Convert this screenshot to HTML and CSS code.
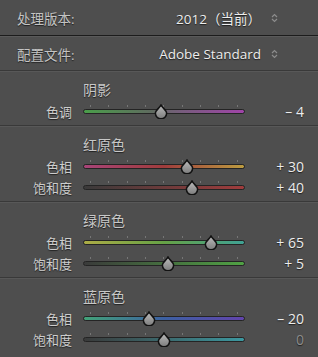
FILE: index.html
```html
<!DOCTYPE html>
<html lang="zh-CN">
<head>
<meta charset="utf-8">
<title>Camera Calibration</title>
<link rel="stylesheet" href="styles.css">
</head>
<body>
<svg class="defs" width="0" height="0" aria-hidden="true">
  <defs>
    <linearGradient id="thumbFill" x1="0" y1="0" x2="0" y2="1">
      <stop offset="0" stop-color="#bdbdbd"/>
      <stop offset="1" stop-color="#7c7c7c"/>
    </linearGradient>
  </defs>
</svg>
<div class="panel">
  <div class="row">
    <span class="lbl">处理版本:</span>
    <span class="val">2012（当前）</span>
    <svg class="updown" width="7" height="10" viewBox="0 0 7 10"><path d="M1 4 L3.5 1.5 L6 4 M1 6 L3.5 8.5 L6 6" fill="none" stroke="#8c8c8c" stroke-width="1.2"/></svg>
  </div>
  <div class="row second">
    <span class="lbl">配置文件:</span>
    <span class="val">Adobe Standard</span>
    <svg class="updown" width="7" height="10" viewBox="0 0 7 10"><path d="M1 4 L3.5 1.5 L6 4 M1 6 L3.5 8.5 L6 6" fill="none" stroke="#8c8c8c" stroke-width="1.2"/></svg>
  </div>

  <section class="group">
    <div class="ghead">阴影</div>
    <div class="srow">
      <span class="slbl">色调</span>
      <div class="track g-tone"><i class="ticks"></i><svg class="thumb" style="left:48.1%" width="14" height="15" viewBox="0 0 14 15"><path d="M7 1 C8.2 3.8 12.6 6.2 12.6 9.2 A5.6 5.6 0 0 1 1.4 9.2 C1.4 6.2 5.8 3.8 7 1 Z" fill="url(#thumbFill)" stroke="#121212" stroke-width="1.5"/></svg></div>
      <span class="sval">– 4</span>
    </div>
  </section>

  <section class="group">
    <div class="ghead">红原色</div>
    <div class="srow">
      <span class="slbl">色相</span>
      <div class="track g-red-hue"><i class="ticks"></i><svg class="thumb" style="left:64.2%" width="14" height="15" viewBox="0 0 14 15"><path d="M7 1 C8.2 3.8 12.6 6.2 12.6 9.2 A5.6 5.6 0 0 1 1.4 9.2 C1.4 6.2 5.8 3.8 7 1 Z" fill="url(#thumbFill)" stroke="#121212" stroke-width="1.5"/></svg></div>
      <span class="sval">+ 30</span>
    </div>
    <div class="srow">
      <span class="slbl">饱和度</span>
      <div class="track g-red-sat"><i class="ticks"></i><svg class="thumb" style="left:67.3%" width="14" height="15" viewBox="0 0 14 15"><path d="M7 1 C8.2 3.8 12.6 6.2 12.6 9.2 A5.6 5.6 0 0 1 1.4 9.2 C1.4 6.2 5.8 3.8 7 1 Z" fill="url(#thumbFill)" stroke="#121212" stroke-width="1.5"/></svg></div>
      <span class="sval">+ 40</span>
    </div>
  </section>

  <section class="group">
    <div class="ghead">绿原色</div>
    <div class="srow">
      <span class="slbl">色相</span>
      <div class="track g-green-hue"><i class="ticks"></i><svg class="thumb" style="left:79.6%" width="14" height="15" viewBox="0 0 14 15"><path d="M7 1 C8.2 3.8 12.6 6.2 12.6 9.2 A5.6 5.6 0 0 1 1.4 9.2 C1.4 6.2 5.8 3.8 7 1 Z" fill="url(#thumbFill)" stroke="#121212" stroke-width="1.5"/></svg></div>
      <span class="sval">+ 65</span>
    </div>
    <div class="srow">
      <span class="slbl">饱和度</span>
      <div class="track g-green-sat"><i class="ticks"></i><svg class="thumb" style="left:52.5%" width="14" height="15" viewBox="0 0 14 15"><path d="M7 1 C8.2 3.8 12.6 6.2 12.6 9.2 A5.6 5.6 0 0 1 1.4 9.2 C1.4 6.2 5.8 3.8 7 1 Z" fill="url(#thumbFill)" stroke="#121212" stroke-width="1.5"/></svg></div>
      <span class="sval">+ 5</span>
    </div>
  </section>

  <section class="group">
    <div class="ghead">蓝原色</div>
    <div class="srow">
      <span class="slbl">色相</span>
      <div class="track g-blue-hue"><i class="ticks"></i><svg class="thumb" style="left:40.7%" width="14" height="15" viewBox="0 0 14 15"><path d="M7 1 C8.2 3.8 12.6 6.2 12.6 9.2 A5.6 5.6 0 0 1 1.4 9.2 C1.4 6.2 5.8 3.8 7 1 Z" fill="url(#thumbFill)" stroke="#121212" stroke-width="1.5"/></svg></div>
      <span class="sval">– 20</span>
    </div>
    <div class="srow">
      <span class="slbl">饱和度</span>
      <div class="track g-blue-sat"><i class="ticks"></i><svg class="thumb" style="left:50%" width="14" height="15" viewBox="0 0 14 15"><path d="M7 1 C8.2 3.8 12.6 6.2 12.6 9.2 A5.6 5.6 0 0 1 1.4 9.2 C1.4 6.2 5.8 3.8 7 1 Z" fill="url(#thumbFill)" stroke="#121212" stroke-width="1.5"/></svg></div>
      <span class="sval dim">0</span>
    </div>
  </section>
</div>
</body>
</html>
```

FILE: styles.css
```css
* { box-sizing: border-box; }

html, body {
  margin: 0;
  padding: 0;
  background: #4e4e4e;
}

body {
  width: 318px;
  height: 357px;
  overflow: hidden;
  font-family: "Open Sans", "Noto Sans CJK SC", sans-serif;
  color: #d0d0d0;
  text-shadow: 0 1px 1px rgba(0, 0, 0, 0.6);
}

.defs {
  position: absolute;
  width: 0;
  height: 0;
}

.panel {
  display: flex;
  flex-direction: column;
}

.row {
  display: flex;
  align-items: center;
  height: 35px;
  padding: 0 40px 0 17px;
  font-size: 13.5px;
}

.row.second {
  border-top: 1px solid #1c1c1c;
  box-shadow: inset 0 1px 0 #5a5a5a;
  padding-top: 1px;
}

.lbl {
  color: #c4c4c4;
  flex: 1;
}

.val {
  color: #ededed;
  margin-right: 10px;
}

.updown {
  display: block;
}

.group {
  border-top: 1px solid #393939;
  box-shadow: inset 0 1px 0 #585858;
  padding: 7px 0 3px;
}

.ghead {
  height: 23px;
  line-height: 23px;
  padding-left: 83px;
  font-size: 14px;
  color: #c8c8c8;
}

.srow {
  display: grid;
  grid-template-columns: 83px 162px 59px;
  align-items: center;
  height: 21px;
  padding-right: 14px;
}

.slbl {
  text-align: right;
  font-size: 13px;
  color: #cdcdcd;
  margin-right: 11px;
}

.track {
  position: relative;
  height: 5px;
  border: 1px solid #242424;
  border-radius: 3px;
}

.ticks {
  position: absolute;
  left: 6px;
  top: -5px;
  width: 148px;
  height: 2px;
  background: repeating-linear-gradient(90deg, #767676 0 1px, transparent 1px 18.33px);
}

.thumb {
  position: absolute;
  top: -6px;
  transform: translateX(-50%);
  display: block;
}

.sval {
  text-align: right;
  font-size: 14px;
  color: #ededed;
}

.sval.dim {
  color: #8c8c8c;
}

.g-tone { background: linear-gradient(90deg, #4a9e4a, #5f6b5f 42%, #785c7e 62%, #a044a8); }
.g-red-hue { background: linear-gradient(90deg, #a84478, #a03c3c 50%, #bc9c40); }
.g-red-sat { background: linear-gradient(90deg, #3a3a3a, #a03c3c); }
.g-green-hue { background: linear-gradient(90deg, #acac46, #66a246 50%, #40a294); }
.g-green-sat { background: linear-gradient(90deg, #3a3a3a, #50a244); }
.g-blue-hue { background: linear-gradient(90deg, #42a278, #3c60a2 50%, #6244ac); }
.g-blue-sat { background: linear-gradient(90deg, #3a3a3a, #3c98a0); }
```
